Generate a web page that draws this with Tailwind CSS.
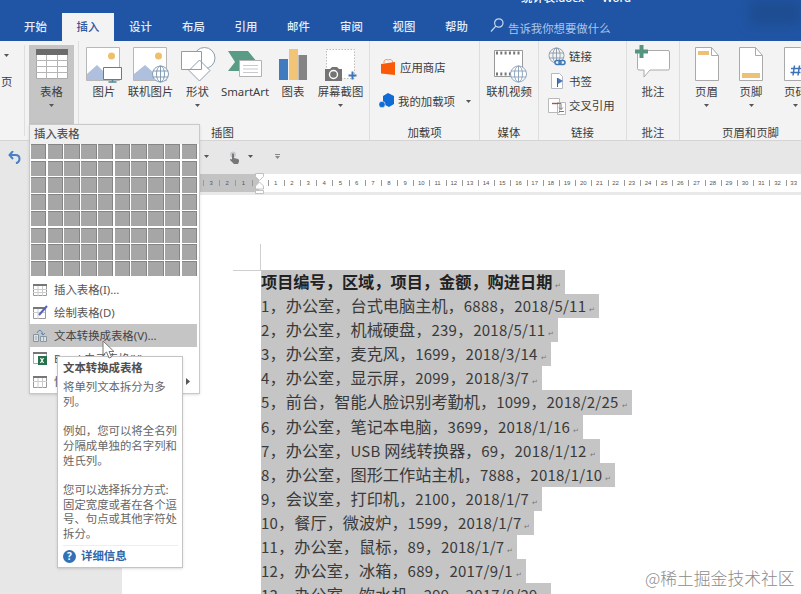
<!DOCTYPE html>
<html lang="zh-CN">
<head>
    <meta charset="UTF-8">
    <meta name="viewport" content="width=device-width, initial-scale=1.0">
    <title>统计表.docx - Word</title>
    <script src="https://cdn.jsdelivr.net/npm/@tailwindcss/browser@4"></script>
</head>
<body class="relative w-[801px] h-[594px] overflow-hidden bg-white font-['Noto_Sans','Noto_Sans_CJK_SC',sans-serif] text-[11.4px] leading-[15px] text-[#444]">

    <!-- Title bar and tabs -->
    <header class="relative h-[41px] bg-[#2055a5] flex items-end overflow-hidden text-[#e3ecf8] font-medium">
        <div class="absolute left-[521px] top-[-10px] flex gap-[18px] whitespace-nowrap text-white"><span>统计表.docx</span><span>Word</span></div>
        <div class="absolute right-0 top-0 w-[52px] h-[25px] bg-[#1c4786]/60 blur-[6px]"></div>
        <nav class="flex h-7 pl-[9px] text-center leading-7">
            <a class="w-[53px]">开始</a>
            <a class="w-[52px] bg-[#f3f3f3] text-[#3156a0]">插入</a>
            <a class="w-[53px]">设计</a>
            <a class="w-[53px]">布局</a>
            <a class="w-[52px]">引用</a>
            <a class="w-[53px]">邮件</a>
            <a class="w-[53px]">审阅</a>
            <a class="w-[52px]">视图</a>
            <a class="w-[53px]">帮助</a>
        </nav>
        <div class="flex items-center h-7 pl-[7px] gap-1 font-normal text-[#a9c5ec]">
            <svg class="w-[14px] h-[15px] -mt-1" viewBox="0 0 14 15" fill="none" stroke="#c5d8f2" stroke-width="1.2"><circle cx="8.8" cy="5" r="4.2"/><path d="M5.8 8.2 1 13.5"/></svg>
            <span class="pt-[2px]">告诉我你想要做什么</span>
        </div>
    </header>

    <!-- Ribbon -->
    <section class="flex h-[100px] bg-[#f3f3f3] border-b border-[#d4d4d4] text-center whitespace-nowrap text-[#3c3c3c]">
        <div class="w-[25px] border-r border-[#dedede] my-1 flex flex-col pt-[9px]">
            <svg class="w-[5px] h-[3px] ml-1 mb-[17px]"><path d="M0 0h5L2.500 3z" fill="#555"/></svg>
            <span class="h-[24px] text-left pl-[1px]">页</span>
        </div>

        <div class="w-[54px] border-r border-[#dedede] pl-1 pt-1">
            <div class="w-[45px] h-[79px] bg-[#c5c5c5] flex flex-col items-center pt-1">
                <svg class="w-8 h-[30px]" viewBox="0 0 32 30"><path d="M.5.5h31v29H.5z" fill="#fff" stroke="#aaa"/><path d="M0 0h32v6H0z" fill="#6b6b6b"/><path d="M0 11.5h32M0 17.5h32M0 23.5h32M10.5 6v24M21.5 6v24" stroke="#b5b5b5"/></svg>
                <span class="mt-[5px]">表格</span>
                <svg class="w-[5px] h-[3px] mt-[5px]"><path d="M0 0h5L2.5 3z" fill="#555"/></svg>
            </div>
        </div>

        <div class="w-[291px] border-r border-[#dedede] flex flex-col">
            <div class="flex h-[84px] pt-[6px] pl-[2px]">
                <div class="w-[46px] flex flex-col items-center">
                    <svg class="w-9 h-9" viewBox="0 0 36 36"><path d="M.5.5h33v33H.5z" fill="#fff" stroke="#b8b8b8"/><circle cx="25.500" cy="9" r="3.500" fill="#efc06c"/><path d="M1 27 11 18l8 8v7H1z" fill="#afc0df"/><path d="M17.500 20.500h18v12h-18z" fill="#fff" stroke="#4c82ad"/><path d="M26.500 33v2m-4 0h8" stroke="#4b8a96" stroke-width="1.500"/></svg>
                    <span class="mt-px">图片</span>
                </div>
                <div class="w-[47px] flex flex-col items-center">
                    <svg class="w-9 h-9" viewBox="0 0 36 36"><path d="M.5.5h33v33H.5z" fill="#fff" stroke="#b8b8b8"/><circle cx="25.500" cy="9" r="3.500" fill="#efc06c"/><path d="M1 27 12 18l9 8v7H1z" fill="#afc0df"/><g fill="#fff" stroke="#7792ad" stroke-width=".9"><circle cx="27.500" cy="27" r="8"/><ellipse cx="27.500" cy="27" rx="4" ry="8"/><path d="M27.500 19v16M20 24h15M20 30h15"/></g></svg>
                    <span class="mt-px">联机图片</span>
                </div>
                <div class="w-[47px] flex flex-col items-center">
                    <svg class="w-9 h-9" viewBox="0 0 36 36" fill="#fff" stroke="#909cab"><circle cx="24.500" cy="11" r="10.500"/><path d="M1.500 4.500h20v18h-20zM19.500 13 30 23.500 19.500 34 9 23.500z"/></svg>
                    <span class="mt-px">形状</span>
                    <svg class="w-[5px] h-[3px] mt-[5px]"><path d="M0 0h5L2.500 3z" fill="#555"/></svg>
                </div>
                <div class="w-[48px] flex flex-col items-center">
                    <svg class="w-9 h-9" viewBox="0 0 36 36"><path d="M1 4h20l9 11-9 9H1l7-9z" fill="#5a9b85"/><path d="M12.500 13.500h22v16h-22z" fill="#fff" stroke="#b2b2b2"/><path d="M16 18.500h15M16 22h15M16 25.500h15" stroke="#c6c9cd"/></svg>
                    <span class="mt-px">SmartArt</span>
                </div>
                <div class="w-[48px] flex flex-col items-center">
                    <svg class="w-9 h-9" viewBox="0 0 36 36"><path d="M4 12h9v21H4z" fill="#407bc0"/><path d="M14 2h9v31h-9z" fill="#f2c477"/><path d="M23.500 8H32v25h-8.500z" fill="#848484"/></svg>
                    <span class="mt-px">图表</span>
                </div>
                <div class="w-[47px] flex flex-col items-center">
                    <svg class="w-9 h-9" viewBox="0 0 36 36"><path d="M3.500 2.500h28v29h-28z" fill="#fff" stroke="#bbb" stroke-dasharray="1.500 1.500"/><path d="M2 22h5l2-2h5l2 2h3v12H2z" fill="#747474"/><circle cx="10.500" cy="27.500" r="4" fill="#747474" stroke="#fff" stroke-width="1.400"/><path d="M29.500 24.500v8m-4-4h8" stroke="#3c76be" stroke-width="2"/></svg>
                    <span class="mt-px">屏幕截图</span>
                    <svg class="w-[5px] h-[3px] mt-[5px]"><path d="M0 0h5L2.500 3z" fill="#555"/></svg>
                </div>
            </div>
            <span class="-ml-[3px]">插图</span>
        </div>

        <div class="w-[110px] border-r border-[#dedede] flex flex-col">
            <div class="h-[84px] flex flex-col items-start pt-[18px] pl-[9px] gap-[18px]">
                <div class="flex items-center gap-1 h-4 pl-[1px]">
                    <svg class="w-4 h-[18px]" viewBox="0 0 16 18"><path d="M4 5V3q2-3 4-1 4-2 5 3" fill="none" stroke="#ed9a70"/><path d="m1 6 14-2v13L1 15.500z" fill="#fa5a08"/></svg>
                    <span>应用商店</span>
                </div>
                <div class="flex items-center gap-1 h-4">
                    <svg class="w-[15px] h-4" viewBox="0 0 15 16"><path d="m9 0 6 3v8l-5 3-6-3V3z" fill="#116bd7"/><circle cx="3" cy="11.500" r="3.200" fill="#116bd7" stroke="#f3f3f3" stroke-width=".6"/></svg>
                    <span>我的加载项</span>
                    <svg class="w-[5px] h-[3px] ml-[7px]"><path d="M0 0h5L2.500 3z" fill="#555"/></svg>
                </div>
            </div>
            <span>加载项</span>
        </div>

        <div class="w-[59px] border-r border-[#dedede] flex flex-col items-center">
            <div class="h-[84px] flex flex-col items-center pt-[6px]">
                <svg class="w-9 h-9" viewBox="0 0 36 36"><path d="M3.500 3.500h28v26h-28z" fill="#fff" stroke="#999"/><path d="M5 6h25M5 27h15" stroke="#777" stroke-width="3" stroke-dasharray="2 2.300"/><g fill="#fff" stroke="#879fb8" stroke-width=".9"><circle cx="27.500" cy="27" r="8"/><ellipse cx="27.500" cy="27" rx="4" ry="8"/><path d="M27.500 19v16M20 24h15M20 30h15"/></g></svg>
                <span class="mt-px">联机视频</span>
            </div>
            <span>媒体</span>
        </div>

        <div class="w-[88px] border-r border-[#dedede] flex flex-col">
            <div class="h-[84px] flex flex-col pt-[3px] pl-[9px]">
                <div class="flex items-center h-[25px] gap-[2px]">
                    <svg class="w-[18px] h-[19px]" viewBox="0 0 18 19" fill="none" stroke="#8998a8" stroke-width=".9"><circle cx="8.500" cy="8.500" r="7.500"/><ellipse cx="8.500" cy="8.500" rx="3.600" ry="7.500"/><path d="M8.500 1v15M1 6h15M1 11h15"/><path d="M7 13h10v5H7z" fill="#f3f3f3" stroke="none"/><g stroke="#3c77b7" stroke-width="1.500"><rect x="7" y="13.500" width="6" height="4" rx="2"/><rect x="11" y="13.500" width="6" height="4" rx="2"/></g></svg>
                    <span class="pl-[1px]">链接</span>
                </div>
                <div class="flex items-center h-6 gap-[2px]">
                    <svg class="w-[18px] h-[18px]" viewBox="0 0 18 18"><path d="M3.500 1.500h8l3 3v12h-11z" fill="#fff" stroke="#b3bac3"/><path d="M9.500 6v9" stroke="#42618c"/><path d="m10 6 5 3-5 3z" fill="#4c79b5"/></svg>
                    <span class="pl-[1px]">书签</span>
                </div>
                <div class="flex items-center h-[25px] gap-[2px]">
                    <svg class="w-[18px] h-[18px]" viewBox="0 0 18 18"><path d="M.5 1.500h11v14H.5zM9.500 5.500h8v12h-8z" fill="#fff" stroke="#b9b9b9"/><path d="M4 6.500h6" stroke="#c34848" stroke-width="1.400"/><path d="M10 6.500h3v6m-2-2 2 2 2-2M11 14.500h5" fill="none" stroke="#777"/></svg>
                    <span class="pl-[1px]">交叉引用</span>
                </div>
            </div>
            <span>链接</span>
        </div>

        <div class="w-[53px] border-r border-[#dedede] flex flex-col items-center">
            <div class="h-[84px] flex flex-col items-center pt-1">
                <svg class="w-9 h-9" viewBox="0 0 36 36"><path d="M3 5.500h30q1.500 0 1.500 1.500v16.500q0 1.500-1.500 1.500H15l-6 7v-7H4q-1.500 0-1.500-1.500V7z" fill="#fff" stroke="#aaa"/><path d="M6.500 0v13M0 6.500h13" stroke="#559580" stroke-width="4"/></svg>
                <span class="mt-[3px]">批注</span>
            </div>
            <span>批注</span>
        </div>

        <div class="w-[121px] flex flex-col">
            <div class="h-[84px] flex pt-[6px] pl-1">
                <div class="w-[45px] shrink-0 flex flex-col items-center">
                    <svg class="w-[26px] h-9" viewBox="0 0 26 36"><path d="M1.500.5h16l7 8v25h-23z" fill="#fff" stroke="#aaa"/><path d="M17.500.5v8h7" fill="none" stroke="#aaa"/><path d="M4 4h11v4H4z" fill="#ecc077"/></svg>
                    <span class="mt-px">页眉</span>
                    <svg class="w-[5px] h-[3px] mt-[5px]"><path d="M0 0h5L2.500 3z" fill="#555"/></svg>
                </div>
                <div class="w-[44px] shrink-0 flex flex-col items-center">
                    <svg class="w-[26px] h-9" viewBox="0 0 26 36"><path d="M1.500.5h16l7 8v25h-23z" fill="#fff" stroke="#aaa"/><path d="M17.500.5v8h7" fill="none" stroke="#aaa"/><path d="M4 26h18v5H4z" fill="#ecc077"/></svg>
                    <span class="mt-px">页脚</span>
                    <svg class="w-[5px] h-[3px] mt-[5px]"><path d="M0 0h5L2.500 3z" fill="#555"/></svg>
                </div>
                <div class="w-[45px] shrink-0 flex flex-col items-center">
                    <svg class="w-[26px] h-9" viewBox="0 0 26 36"><path d="M1.500.5h16l7 8v25h-23z" fill="#fff" stroke="#aaa"/><path d="M11.500 18.500 10 28.500m6.500-10L15 28.500M8 21.500h10M7.500 25.500h10" stroke="#3e72b5" stroke-width="1.500"/></svg>
                    <span class="mt-px">页码</span>
                    <svg class="w-[5px] h-[3px] mt-[5px]"><path d="M0 0h5L2.500 3z" fill="#555"/></svg>
                </div>
            </div>
            <span class="pl-5">页眉和页脚</span>
        </div>
    </section>

    <!-- Quick access toolbar -->
    <section class="flex items-center h-[33px] bg-[#e7e7e7] pl-2">
        <svg class="w-[13px] h-[13px] mr-[183px]" viewBox="0 0 13 13" fill="none" stroke="#4a80c8" stroke-width="2"><path d="M5 0 1.500 4 5 8M2 4h5.500q4 0 4 4 0 3-3.500 4.500"/></svg>
        <svg class="w-[5px] h-[3px] -mt-[2px]"><path d="M0 0h5L2.500 3z" fill="#555"/></svg>
        <svg class="w-[11px] h-[13px] ml-5" viewBox="0 0 11 13"><circle cx="4" cy="3.500" r="3" fill="#c8ccd0"/><path d="M3 3q1-1.500 2 0v4l4 1q1.500.5 1 2.500L9 13H5L1 9q0-1.500 2-.5z" fill="#777"/></svg>
        <svg class="w-[5px] h-[3px] ml-[8px] -mt-[2px]"><path d="M0 0h5L2.500 3z" fill="#555"/></svg>
        <svg class="w-[5px] h-[5px] ml-[22px] -mt-[2px]"><path d="M0 0h5v1H0zM0 2h5L2.500 5z" fill="#888"/></svg>
    </section>

    <!-- Workspace -->
    <main class="flex h-[420px]">
        <div class="w-[122px] shrink-0 bg-[#e7e7e7]"></div>
        <div class="w-[679px] flex flex-col">
            <div class="flex h-[18px] shrink-0 bg-white font-['Liberation_Sans',sans-serif] text-[6px] leading-[18px] text-center text-[#555]">
                <div id="rulerMargin" class="flex w-[137px] shrink-0 pl-[81px] bg-[#c3c3c3] overflow-hidden"></div>
                <div id="ruler" class="flex pl-[8.6px] overflow-hidden"></div>
            </div>
            <div class="h-[3px] shrink-0 bg-[#e9e9e9]"></div>
            <div class="flex pt-[49px]">
                <div class="w-[139px] shrink-0 flex justify-end">
                    <div class="w-7 h-[27px] border-r border-b border-[#cfcfcf]"></div>
                </div>
                <div id="lines" class="pt-[26px] flex flex-col items-start whitespace-pre text-[16.2px] leading-[22px] text-[#3a3a3a] font-['Noto_Sans_CJK_SC',sans-serif]"></div>
            </div>
        </div>
    </main>

    <!-- Indent marker on the ruler -->
    <svg class="absolute left-[255px] top-[173px] w-[9px] h-[22px]" viewBox="0 0 9 22" fill="#fff" stroke="#bbb" stroke-width=".9"><path d="M.5.5h8v3l-4 4-4-4zM.5 16v-3l4-4 4 4v3zM.5 17.500h8v3h-8z"/></svg>

    <!-- Table dropdown -->
    <div class="absolute left-[29px] top-[124px] w-[171px] h-[270px] bg-white border border-[#c9c9c9] shadow-sm flex flex-col text-[#555]">
        <div class="h-[19px] bg-[#f0f0f0] pl-1 pt-px font-medium">插入表格</div>
        <div id="grid" class="grid grid-cols-10 gap-[1.3px] w-[166px] h-[133px] ml-px mb-[2px]"></div>
        <div class="flex items-center h-[23px] pl-[3px] gap-[7px]">
            <svg class="w-[14px] h-3" viewBox="0 0 14 12"><path d="M.5.5h13v11H.5z" fill="#fff" stroke="#999"/><path d="M0 0h14v2H0z" fill="#777"/><path d="M0 5.500h14M0 8.500h14M5 2v10M9.500 2v10" stroke="#ccc"/></svg>
            <span>插入表格(I)...</span>
        </div>
        <div class="flex items-center h-[23px] pl-[3px] gap-[7px]">
            <svg class="w-[14px] h-3 overflow-visible" viewBox="0 0 14 12"><path d="M.5.5h12v11H.5z" fill="#fff" stroke="#999"/><path d="M0 0h11v2H0z" fill="#777"/><path d="M0 5.500h12M5 2v10" stroke="#ccc"/><path d="m6 8 8-9" stroke="#5562c0" stroke-width="2"/></svg>
            <span>绘制表格(D)</span>
        </div>
        <div class="flex items-center h-[23px] pl-[3px] gap-[7px] mr-[2px] bg-[#c5c5c5] text-[#444]">
            <svg class="w-[14px] h-[13px]" viewBox="0 0 14 13"><path d="M.5 5.500h5v7h-5zM7.500 7.500h6v5h-6z" fill="#d9e0e6" stroke="#8795a0"/><path d="M2 8h2M2 10h2M10.500 8v5" stroke="#9aa"/><path d="M4 4q3-6 6 1m-2-1 2 2 2-2" fill="none" stroke="#5d8bb6"/></svg>
            <span>文本转换成表格(V)...</span>
        </div>
        <div class="flex items-center h-[23px] pl-[3px] gap-[7px]">
            <svg class="w-[14px] h-[13px]" viewBox="0 0 14 13"><path d="M.5.5h13v11H.5z" fill="#fff" stroke="#aaa"/><path d="M0 0h14v2H0z" fill="#777"/><path d="M5 4h9v9H5z" fill="#24714c"/><path d="m7.500 6 3 5m0-5-3 5" stroke="#fff" stroke-width="1.200"/></svg>
            <span>Excel 电子表格(X)</span>
        </div>
        <div class="flex items-center h-[23px] pl-[3px] gap-[7px]">
            <svg class="w-[14px] h-3" viewBox="0 0 14 12"><path d="M.5.5h13v11H.5z" fill="#fff" stroke="#999"/><path d="M0 0h14v2H0z" fill="#777"/><path d="M0 5.500h14M5 2v10M9.500 2v10" stroke="#ccc"/></svg>
            <span>快速表格(T)</span>
            <svg class="w-1 h-[7px] ml-auto mr-[9px]"><path d="M0 0v7l4-3.500z" fill="#555"/></svg>
        </div>
    </div>

    <!-- Screen tip -->
    <div class="absolute left-[57px] top-[356px] w-[126px] h-[212px] bg-white border border-[#c4c4c4] shadow-sm pl-[5px] pt-[3px] text-[#666] leading-[14.7px] whitespace-nowrap">
        <h2 class="font-bold leading-[16px] mb-[4px] text-[#505050]">文本转换成表格</h2>
        <p>将单列文本拆分为多<br>列。</p>
        <p class="mt-[14.7px]">例如，您可以将全名列<br>分隔成单独的名字列和<br>姓氏列。</p>
        <p class="mt-[14.7px]">您可以选择拆分方式:<br>固定宽度或者在各个逗<br>号、句点或其他字符处<br>拆分。</p>
        <div class="flex items-center gap-[5px] mt-[3px] mr-1 pt-[3px] border-t border-[#eee] font-bold text-[#2f66a8]">
            <span class="w-[13px] h-[13px] rounded-full bg-[#3272b4] text-white text-[10px] leading-[13px] text-center">?</span>
            <span>详细信息</span>
        </div>
    </div>

    <!-- Mouse pointer -->
    <svg class="absolute left-[102px] top-[340px] w-[14px] h-[19px]" viewBox="0 0 14 19"><path d="M1 1v14l3.500-3 2.500 6 2.500-1L7 11.500h5z" fill="#fff" stroke="#777"/></svg>

    <div class="absolute left-[645px] top-[566px] text-[16.8px] leading-[24px] whitespace-nowrap text-[#8c8c8c] font-['Noto_Sans_CJK_SC',sans-serif] font-light">@稀土掘金技术社区</div>

    <script>
        const lines = [
            '项目编号，区域，项目，金额，购进日期',
            '1，办公室，台式电脑主机，6888，2018/5/11',
            '2，办公室，机械硬盘，239，2018/5/11',
            '3，办公室，麦克风，1699，2018/3/14',
            '4，办公室，显示屏，2099，2018/3/7',
            '5，前台，智能人脸识别考勤机，1099，2018/2/25',
            '6，办公室，笔记本电脑，3699，2018/1/16',
            '7，办公室，USB 网线转换器，69，2018/1/12',
            '8，办公室，图形工作站主机，7888，2018/1/10',
            '9，会议室，打印机，2100，2018/1/7',
            '10，餐厅，微波炉，1599，2018/1/7',
            '11，办公室，鼠标，89，2018/1/7',
            '12，办公室，冰箱，689，2017/9/1',
            '13，办公室，饮水机，299，2017/8/29',
        ];

        // Latin runs use a narrower face than the Chinese text
        document.getElementById('lines').innerHTML = lines.map((line, i) => {
            const text = line.replace(/[0-9A-Z\/ ]+/g, '<span class="font-[\'Noto_Sans\',sans-serif] text-[15px] tracking-[0.22px]">$&</span>');
            const weight = i === 0 ? 'font-bold text-[#222]' : '';
            return `<div class="h-[24.1px] bg-[#c5c5c5] ${weight}">${text}<span class="inline-block w-[13px] pl-[3px] text-[7px] leading-none font-normal text-[#777]">↵</span></div>`;
        }).join('');

        // Table size picker, 10 x 8
        document.getElementById('grid').innerHTML =
            '<div class="bg-[#a6a6a6] border-t border-r border-[#858585]"></div>'.repeat(80);

        const tick = n => `<div class="relative w-[16.2px] shrink-0"><span class="absolute left-0 top-[6px] w-px h-[6px] bg-[#999]"></span>${n}</div>`;
        document.getElementById('rulerMargin').innerHTML = [3, 2, 1, ''].map(tick).join('');
        document.getElementById('ruler').innerHTML = Array.from({ length: 33 }, (_, i) => tick(i + 1)).join('');
    </script>
</body>
</html>
